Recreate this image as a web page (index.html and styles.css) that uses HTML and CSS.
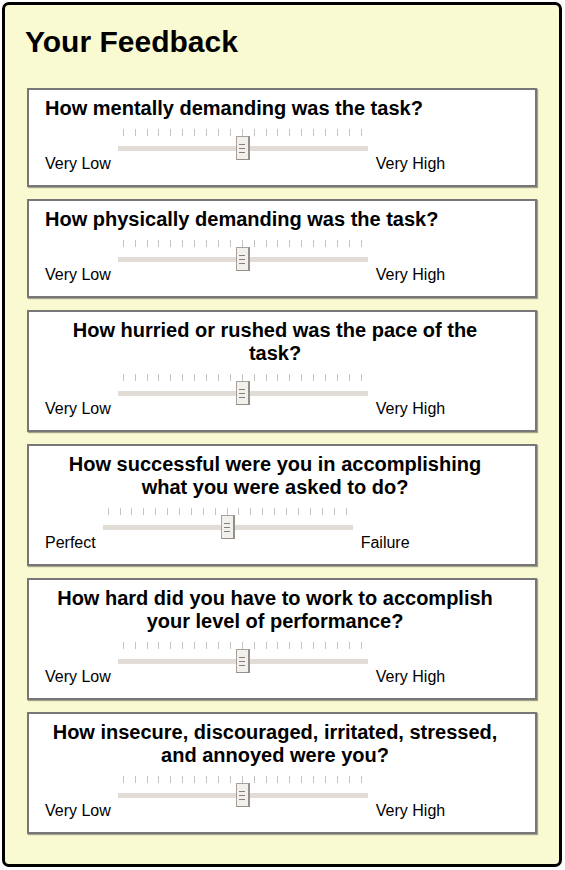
FILE: index.html
```html
<!DOCTYPE html>
<html>
<head>
<meta charset="utf-8">
<link rel="stylesheet" href="styles.css">
</head>
<body>
<div class="panel">
  <h1 class="title">Your Feedback</h1>
  <div class="cards">
    <div class="card">
      <div class="question">How mentally demanding was the task?</div>
      <div class="row">
        <span class="label">Very Low</span>
        <div class="slider">
          <div class="ticks"><i></i><i></i><i></i><i></i><i></i><i></i><i></i><i></i><i></i><i></i><i></i><i></i><i></i><i></i><i></i><i></i><i></i><i></i><i></i><i></i><i></i></div>
          <div class="track"></div>
          <div class="thumb"><b></b><b></b><b></b></div>
        </div>
        <span class="label">Very High</span>
      </div>
    </div>
    <div class="card">
      <div class="question">How physically demanding was the task?</div>
      <div class="row">
        <span class="label">Very Low</span>
        <div class="slider">
          <div class="ticks"><i></i><i></i><i></i><i></i><i></i><i></i><i></i><i></i><i></i><i></i><i></i><i></i><i></i><i></i><i></i><i></i><i></i><i></i><i></i><i></i><i></i></div>
          <div class="track"></div>
          <div class="thumb"><b></b><b></b><b></b></div>
        </div>
        <span class="label">Very High</span>
      </div>
    </div>
    <div class="card">
      <div class="question">How hurried or rushed was the pace of the task?</div>
      <div class="row">
        <span class="label">Very Low</span>
        <div class="slider">
          <div class="ticks"><i></i><i></i><i></i><i></i><i></i><i></i><i></i><i></i><i></i><i></i><i></i><i></i><i></i><i></i><i></i><i></i><i></i><i></i><i></i><i></i><i></i></div>
          <div class="track"></div>
          <div class="thumb"><b></b><b></b><b></b></div>
        </div>
        <span class="label">Very High</span>
      </div>
    </div>
    <div class="card">
      <div class="question">How successful were you in accomplishing what you were asked to do?</div>
      <div class="row">
        <span class="label">Perfect</span>
        <div class="slider">
          <div class="ticks"><i></i><i></i><i></i><i></i><i></i><i></i><i></i><i></i><i></i><i></i><i></i><i></i><i></i><i></i><i></i><i></i><i></i><i></i><i></i><i></i><i></i></div>
          <div class="track"></div>
          <div class="thumb"><b></b><b></b><b></b></div>
        </div>
        <span class="label">Failure</span>
      </div>
    </div>
    <div class="card">
      <div class="question">How hard did you have to work to accomplish your level of performance?</div>
      <div class="row">
        <span class="label">Very Low</span>
        <div class="slider">
          <div class="ticks"><i></i><i></i><i></i><i></i><i></i><i></i><i></i><i></i><i></i><i></i><i></i><i></i><i></i><i></i><i></i><i></i><i></i><i></i><i></i><i></i><i></i></div>
          <div class="track"></div>
          <div class="thumb"><b></b><b></b><b></b></div>
        </div>
        <span class="label">Very High</span>
      </div>
    </div>
    <div class="card">
      <div class="question">How insecure, discouraged, irritated, stressed, and annoyed were you?</div>
      <div class="row">
        <span class="label">Very Low</span>
        <div class="slider">
          <div class="ticks"><i></i><i></i><i></i><i></i><i></i><i></i><i></i><i></i><i></i><i></i><i></i><i></i><i></i><i></i><i></i><i></i><i></i><i></i><i></i><i></i><i></i></div>
          <div class="track"></div>
          <div class="thumb"><b></b><b></b><b></b></div>
        </div>
        <span class="label">Very High</span>
      </div>
    </div>
  </div>
</div>
</body>
</html>
```
FILE: styles.css
```css
html, body {
  margin: 0;
  padding: 0;
  background: #ffffff;
}
body {
  font-family: "Liberation Sans", Arial, sans-serif;
  color: #000;
}
.panel {
  box-sizing: border-box;
  width: 560px;
  margin: 2px;
  border: 3px solid #000;
  border-radius: 7px;
  background: #fafad2;
  padding: 0 22px 30px 20px;
}
.title {
  margin: 19px 0 0 0;
  font-size: 30px;
  font-weight: bold;
  line-height: 35px;
}
.cards {
  margin-top: 29px;
  padding-left: 2px;
  display: flex;
  flex-direction: column;
  gap: 12px;
}
.card {
  box-sizing: border-box;
  background: #fff;
  border: 2px solid #777;
  box-shadow: 1px 1px 1px rgba(0, 0, 0, 0.35);
  padding: 7px 15px 12px 16px;
}
.question {
  display: inline-block;
  max-width: 460px;
  text-align: center;
  font-size: 20px;
  font-weight: bold;
  line-height: 23px;
  vertical-align: top;
}
.row {
  display: flex;
  align-items: flex-start;
  margin-top: 9px;
}
.label {
  font-size: 16px;
  line-height: 18px;
  margin-top: 26px;
  white-space: nowrap;
}
.slider {
  position: relative;
  width: 250px;
  height: 31px;
  flex: none;
  margin: 0 8px 0 7px;
}
.ticks {
  display: flex;
  justify-content: space-between;
  margin: 0 6px 0 5px;
  height: 7px;
}
.ticks i {
  display: block;
  width: 1px;
  height: 7px;
  background: #c4c4c4;
}
.track {
  margin-top: 10px;
  height: 5px;
  background: #e1ddd6;
}
.thumb {
  position: absolute;
  box-sizing: border-box;
  left: calc(50% - 7px);
  top: 7px;
  width: 14px;
  height: 24px;
  background: #f2f0ec;
  border: 1px solid #a8a29a;
  border-right: 2px solid #958f87;
  border-bottom: 1px solid #958f87;
  display: flex;
  flex-direction: column;
  align-items: center;
  padding-top: 7px;
  gap: 3px;
}
.thumb b {
  display: block;
  width: 6px;
  height: 1px;
  background: #857f78;
}
```
